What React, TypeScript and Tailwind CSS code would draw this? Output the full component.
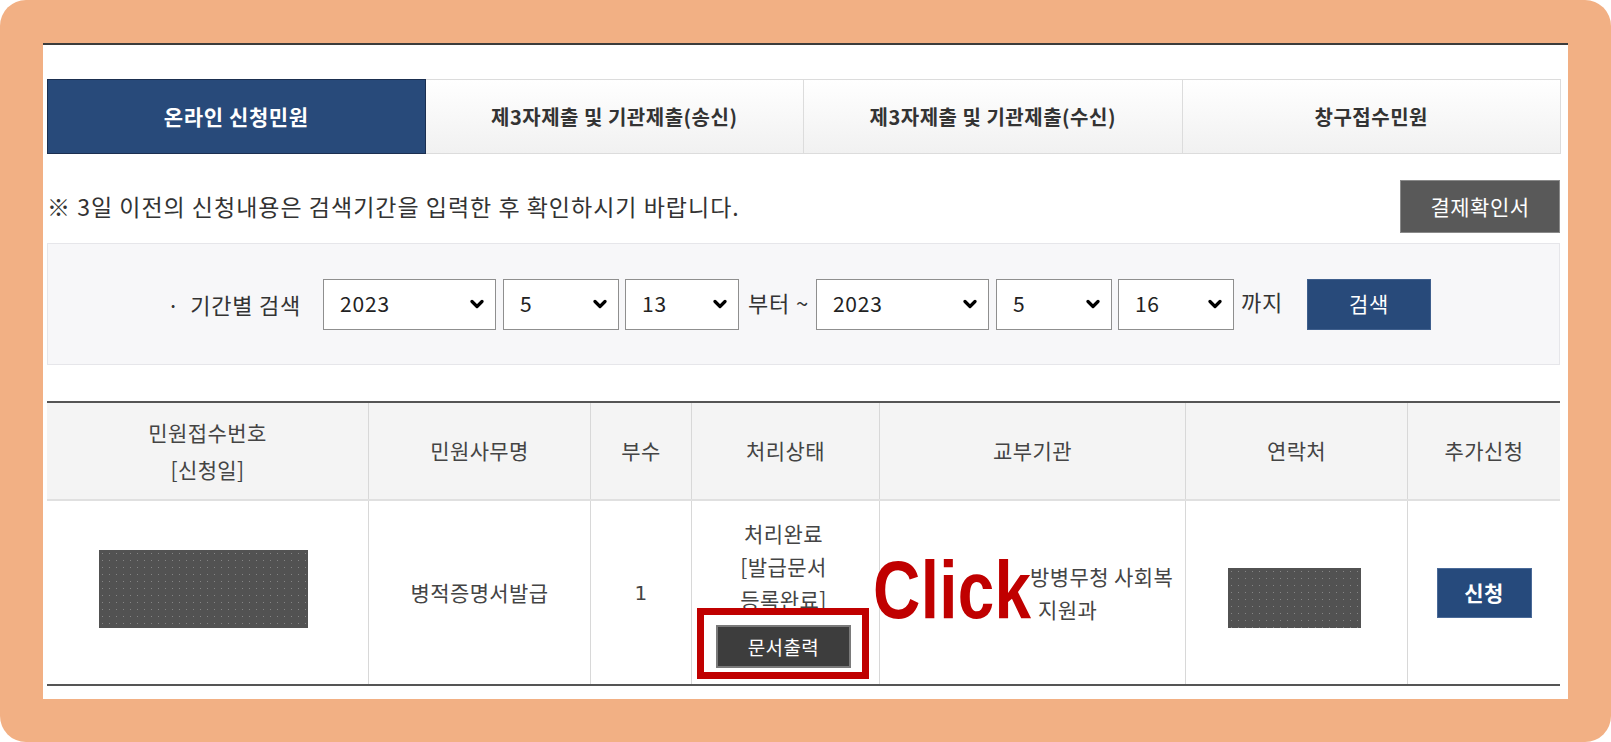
import React from "react";

function Sel({ w, v }: { w: string; v: string }) {
  return (
    <div
      className={`${w} h-[51px] shrink-0 bg-white border border-[#8f8f8f] flex items-center justify-between pl-[16px] pr-[11px] text-[21px] text-[#222]`}
    >
      <span>{v}</span>
      <svg width="14" height="10" viewBox="0 0 14 10">
        <path d="M2 2.5l5 5 5-5" stroke="#000" strokeWidth="3.2" fill="none" strokeLinecap="round" strokeLinejoin="round" />
      </svg>
    </div>
  );
}

function Redact({ w }: { w: string }) {
  return (
    <div
      className={`${w} bg-[#525252] bg-[radial-gradient(circle,#858585_0.7px,transparent_1px)] bg-[length:7px_7px]`}
    />
  );
}

export default function App() {
  return (
    <div className="w-[1611px] h-[742px] bg-white font-['Noto_Sans_CJK_KR','Noto_Sans',sans-serif]">
      <div className="w-full h-full rounded-[26px] bg-[#f2b084] p-[43px]">
        <div className="w-full h-full bg-white border-t-2 border-[#3c3c3c] pl-[4px] pr-[8px] pt-[34px] flex flex-col">
          {/* Tabs */}
          <div className="grid grid-cols-4 h-[75px] mr-[-1px]">
            <div className="flex items-center justify-center bg-[#284a7a] border border-[#1b2f50] text-white text-[21px] font-bold tracking-[0.6px]">
              온라인 신청민원
            </div>
            <div className="flex items-center justify-center bg-gradient-to-b from-white to-[#f1f1f1] border border-l-0 border-[#dcdcdc] text-[#333] text-[20px] font-bold tracking-[0.5px]">
              제3자제출 및 기관제출(송신)
            </div>
            <div className="flex items-center justify-center bg-gradient-to-b from-white to-[#f1f1f1] border border-l-0 border-[#dcdcdc] text-[#333] text-[20px] font-bold tracking-[0.5px]">
              제3자제출 및 기관제출(수신)
            </div>
            <div className="flex items-center justify-center bg-gradient-to-b from-white to-[#f1f1f1] border border-l-0 border-[#dcdcdc] text-[#333] text-[20px] font-bold tracking-[0.5px]">
              창구접수민원
            </div>
          </div>

          {/* Notice row */}
          <div className="mt-[26px] h-[53px] flex items-center justify-between">
            <p className="text-[23px] text-[#333] tracking-[1px]">
              ※ 3일 이전의 신청내용은 검색기간을 입력한 후 확인하시기 바랍니다.
            </p>
            <button className="w-[160px] h-[53px] bg-[#595959] border border-[#8a8a8a] text-white text-[21px] tracking-[0.5px]">
              결제확인서
            </button>
          </div>

          {/* Search box */}
          <div className="mt-[10px] h-[122px] bg-[#f7f7f9] border border-[#e6e6ea] flex items-center justify-center pr-[9px] text-[22px] text-[#333] tracking-[0.8px]">
            <span className="mr-[22px]">
              <span className="mr-[10px]">·</span>기간별 검색
            </span>
            <Sel w="w-[173px]" v="2023" />
            <div className="w-[7px]" />
            <Sel w="w-[116px]" v="5" />
            <div className="w-[6px]" />
            <Sel w="w-[114px]" v="13" />
            <span className="ml-[9px] mr-[7px] -mt-[4px]">부터 ~</span>
            <Sel w="w-[173px]" v="2023" />
            <div className="w-[7px]" />
            <Sel w="w-[116px]" v="5" />
            <div className="w-[6px]" />
            <Sel w="w-[116px]" v="16" />
            <span className="ml-[7px] mr-[24px] -mt-[6px]">까지</span>
            <button className="w-[124px] h-[51px] bg-[#284a7a] border border-[#3f5f8d] text-white text-[21px]">
              검색
            </button>
          </div>

          {/* Table */}
          <div className="mt-[36px] border-t-2 border-b-2 border-[#555] text-[21px] text-[#444] tracking-[0.4px]">
            <div className="grid grid-cols-[321px_222px_101px_188px_306px_222px_153px] h-[98px] bg-[#f4f4f4] border-b-2 border-[#e0e0e0]">
              <div className="flex flex-col items-center justify-center leading-[37px]">
                <span>민원접수번호</span>
                <span>[신청일]</span>
              </div>
              <div className="flex items-center justify-center border-l border-[#d8d8d8]">민원사무명</div>
              <div className="flex items-center justify-center border-l border-[#d8d8d8]">부수</div>
              <div className="flex items-center justify-center border-l border-[#d8d8d8]">처리상태</div>
              <div className="flex items-center justify-center border-l border-[#d8d8d8]">교부기관</div>
              <div className="flex items-center justify-center border-l border-[#d8d8d8]">연락처</div>
              <div className="flex items-center justify-center border-l border-[#d8d8d8]">추가신청</div>
            </div>
            <div className="grid grid-cols-[321px_222px_101px_188px_306px_222px_153px] h-[183px]">
              <div className="flex items-center justify-center pr-[8px] pb-[7px]">
                <Redact w="w-[209px] h-[78px]" />
              </div>
              <div className="flex items-center justify-center border-l border-[#d8d8d8]">병적증명서발급</div>
              <div className="flex items-center justify-center border-l border-[#d8d8d8] font-['DejaVu_Sans',sans-serif] text-[20px]">
                1
              </div>
              <div className="flex flex-col items-center justify-center border-l border-[#d8d8d8] leading-[33px] pr-[4px]">
                <span>처리완료</span>
                <span>[발급문서</span>
                <span>등록완료]</span>
                <div className="relative mt-[9px]">
                  <div className="absolute -left-[19px] -right-[18px] -top-[17px] -bottom-[11px] bg-white border-[7px] border-[#c00000]" />
                  <button className="relative w-[135px] h-[43px] bg-[#3d3d3d] border-2 border-[#7a7a7a] text-white text-[19px] leading-none">
                    문서출력
                  </button>
                </div>
              </div>
              <div className="relative flex flex-col justify-center border-l border-[#d8d8d8] pl-[150px] leading-[33px]">
                <span>방병무청 사회복</span>
                <span className="pl-[8px]">지원과</span>
                <span className="absolute left-[-7px] top-[48px] text-[82px] leading-none font-bold text-[#c00000] font-['Liberation_Sans',Arial,sans-serif] scale-x-[0.8] origin-left">
                  Click
                </span>
              </div>
              <div className="flex items-center justify-center border-l border-[#d8d8d8] pr-[5px] pt-[11px]">
                <Redact w="w-[133px] h-[60px]" />
              </div>
              <div className="flex items-center justify-center border-l border-[#d8d8d8]">
                <button className="w-[95px] h-[50px] bg-[#264a7c] border border-[#4a6a98] text-white text-[21px] font-bold">
                  신청
                </button>
              </div>
            </div>
          </div>
        </div>
      </div>
    </div>
  );
}
